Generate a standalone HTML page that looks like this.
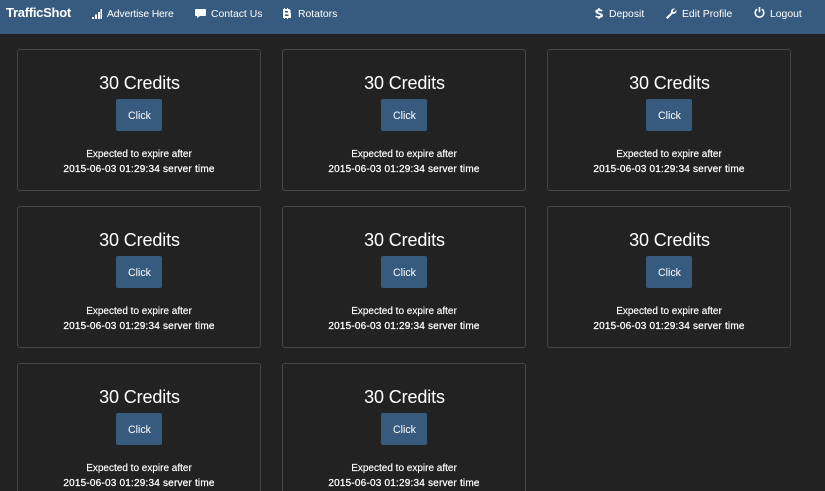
<!DOCTYPE html>
<html>
<head>
<meta charset="utf-8">
<style>
html,body{margin:0;padding:0;width:825px;height:491px;overflow:hidden;background:#222;color:#fff;font-family:"Liberation Sans",sans-serif}
.page{position:relative;width:825px;height:491px;overflow:hidden;background:#222}
.nav{position:absolute;left:0;top:0;width:825px;height:34px;background:#375a7f}
.t{position:absolute;white-space:nowrap;line-height:14px;font-size:10.4px;top:8px;color:#fff}
.brand{position:absolute;left:6px;top:4px;line-height:18px;font-size:13px;font-weight:bold;letter-spacing:-.27px;white-space:nowrap}
svg{position:absolute;fill:#fff}
.card{position:absolute;width:242px;height:140px;border:1px solid #464646;border-radius:3px;text-align:center}
.h{position:absolute;left:1px;right:0;top:22px;line-height:22px;font-size:18px;letter-spacing:-.12px}
.b{position:absolute;left:98px;top:49px;width:46px;height:32px;background:#375a7f;border-radius:2px;font-size:10.6px;line-height:34px;text-indent:1px}
.l{position:absolute;left:0;right:0;font-size:10px;line-height:14px;white-space:nowrap;top:98px;-webkit-text-stroke:.15px #fff}
.l2{top:113px;letter-spacing:.2px;-webkit-text-stroke:.25px #fff}
</style>
</head>
<body>
<div class="page">
<div class="nav">
<div class="brand">TrafficShot</div>
<svg style="left:92px;top:9px" width="10" height="10" viewBox="0 0 10 10"><path d="M0 8h2v2H0zM3 5.500h2V10H3zM6 3h2v7H6zM8.500 0h1.500v10H8.500z"/></svg>
<div class="t" style="left:107px;letter-spacing:-.15px">Advertise Here</div>
<svg style="left:195px;top:8px" width="11" height="11" viewBox="0 0 11 11"><path d="M1 1h9a1 1 0 0 1 1 1v5a1 1 0 0 1-1 1H5L2 10V8H1a1 1 0 0 1-1-1V2a1 1 0 0 1 1-1z"/></svg>
<div class="t" style="left:211px">Contact Us</div>
<svg style="left:282px;top:8px" width="9" height="11" viewBox="0 0 9 11"><path fill-rule="evenodd" d="M2 0h1v1h2V0h1v1h1a2 2 0 0 1 1 3.400A2.300 2.300 0 0 1 7 10H6v1H5v-1H3v1H2v-1H1V1h1zM3 3v1.500h3V3zM3 6.500V8h3.500V6.500z"/></svg>
<div class="t" style="left:298px">Rotators</div>
<svg style="left:595px;top:8px" width="8" height="11" viewBox="0 0 8 11"><path fill-rule="evenodd" d="M3.300 0h1.400v1.300C6 1.400 7 1.800 7.600 2.200L7 3.600C6 3 3 2.500 3 3.700c0 1.300 5 1 5 3.800 0 1.400-1.300 2.200-3.300 2.300V11H3.300V9.800C2 9.700 1 9.300.3 8.800L1 7.400c1 .8 4.400 1.300 4.400 0C5.400 6.200 .3 6.300 .3 3.500.3 2.200 1.500 1.400 3.300 1.300z"/></svg>
<div class="t" style="left:609px">Deposit</div>
<svg style="left:666px;top:8px" width="11" height="11" viewBox="0 0 11 11"><path d="M0 9.500 5 4.600C4.600 2.800 5.800.5 8 .5c.5 0 .8 0 1 .2L7 2.500v1.500h1.500L10.600 2c.3 2.300-1.600 4.300-4 3.800L1.500 11z"/></svg>
<div class="t" style="left:682px">Edit Profile</div>
<svg style="left:754px;top:7px;fill:none;stroke:#fff;stroke-width:1.600" width="11" height="11" viewBox="0 0 11 11"><path d="M3.200 2.200a4.300 4.300 0 1 0 4.600 0M5.500 0v5.200"/></svg>
<div class="t" style="left:770px">Logout</div>
</div>

<div class="card" style="left:17px;top:49px"><div class="h">30 Credits</div><div class="b">Click</div><div class="l">Expected to expire after</div><div class="l l2">2015-06-03 01:29:34 server time</div></div>
<div class="card" style="left:282px;top:49px"><div class="h">30 Credits</div><div class="b">Click</div><div class="l">Expected to expire after</div><div class="l l2">2015-06-03 01:29:34 server time</div></div>
<div class="card" style="left:547px;top:49px"><div class="h">30 Credits</div><div class="b">Click</div><div class="l">Expected to expire after</div><div class="l l2">2015-06-03 01:29:34 server time</div></div>
<div class="card" style="left:17px;top:206px"><div class="h">30 Credits</div><div class="b">Click</div><div class="l">Expected to expire after</div><div class="l l2">2015-06-03 01:29:34 server time</div></div>
<div class="card" style="left:282px;top:206px"><div class="h">30 Credits</div><div class="b">Click</div><div class="l">Expected to expire after</div><div class="l l2">2015-06-03 01:29:34 server time</div></div>
<div class="card" style="left:547px;top:206px"><div class="h">30 Credits</div><div class="b">Click</div><div class="l">Expected to expire after</div><div class="l l2">2015-06-03 01:29:34 server time</div></div>
<div class="card" style="left:17px;top:363px"><div class="h">30 Credits</div><div class="b">Click</div><div class="l">Expected to expire after</div><div class="l l2">2015-06-03 01:29:34 server time</div></div>
<div class="card" style="left:282px;top:363px"><div class="h">30 Credits</div><div class="b">Click</div><div class="l">Expected to expire after</div><div class="l l2">2015-06-03 01:29:34 server time</div></div>
</div>
</body>
</html>
